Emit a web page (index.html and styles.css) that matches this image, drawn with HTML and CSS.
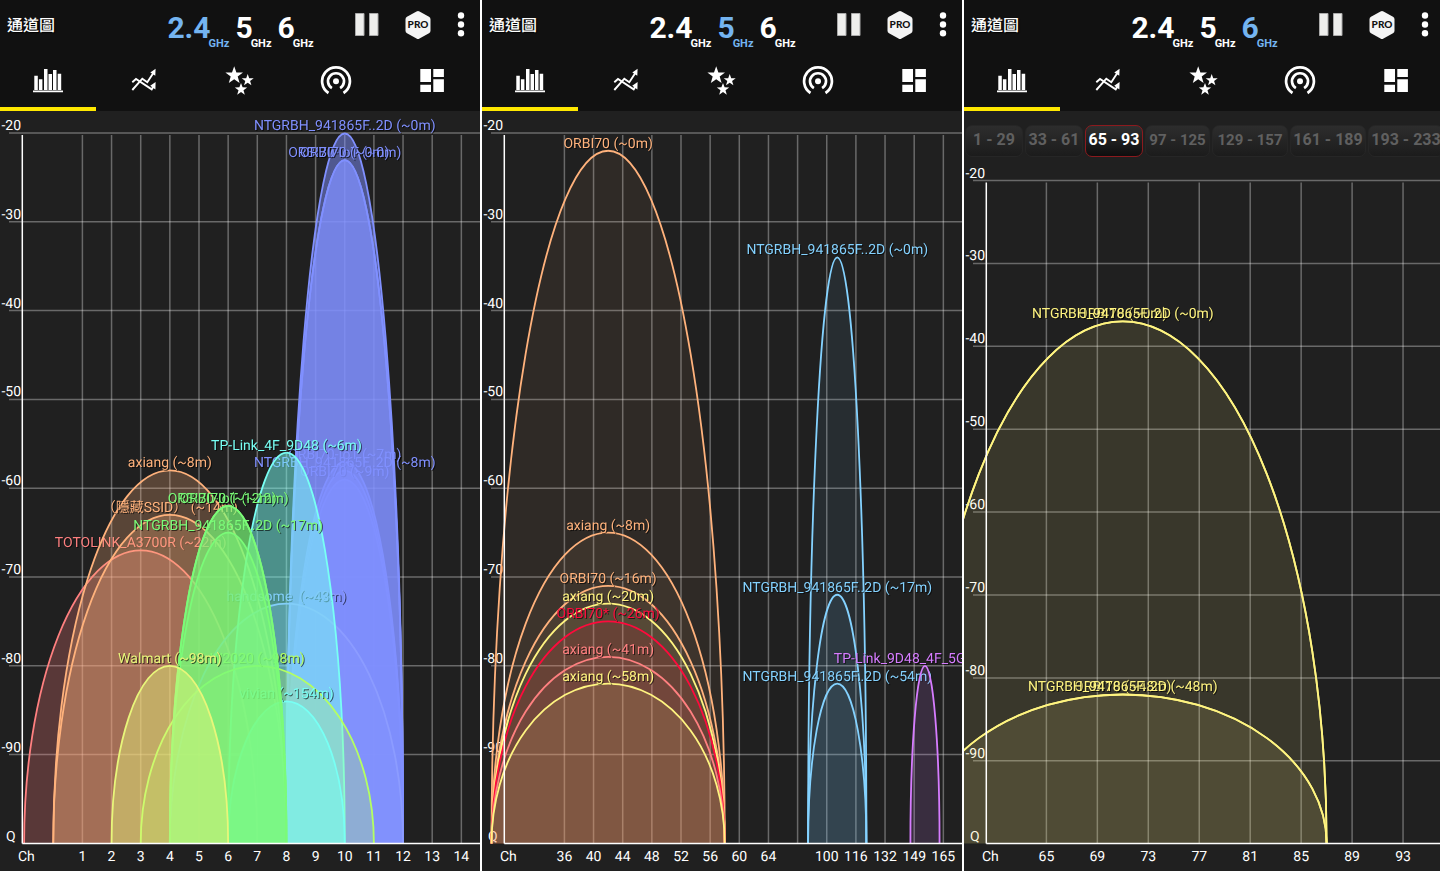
FILE: index.html
```html
<!DOCTYPE html>
<html lang="zh-Hant">
<head>
<meta charset="utf-8">
<title>通道圖</title>
<meta name="viewport" content="width=device-width, initial-scale=1">
<link rel="stylesheet" href="styles.css">
</head>
<body>
<svg class="sprite" aria-hidden="true">
  <symbol id="i-pause" viewBox="0 0 26 26"><path class="pause-bar" d="M1.500 1.500h8.500v22H1.500zM15.500 1.500h8.500v22h-8.500z"/></symbol>
  <symbol id="i-pro" viewBox="0 0 26 30"><path fill="#f4f4f4" d="M11.500 1.500q1.500-1 3 0l9.500 5.200q1.500.8 1.500 2.500v11.600q0 1.700-1.500 2.500l-9.500 5.200q-1.500 1-3 0L2 23.300Q.5 22.500.5 20.800V9.200Q.5 7.500 2 6.700z"/><text class="pro-text" x="13" y="17.500" text-anchor="middle">PRO</text></symbol>
  <symbol id="i-more" viewBox="0 0 8 26"><circle cx="4" cy="3.500" r="3.200"/><circle cx="4" cy="12.500" r="3.200"/><circle cx="4" cy="21.300" r="3.200"/></symbol>
  <symbol id="i-bars" viewBox="0 0 32 32"><path d="M2.300 10.700h3.500V25H2.300zM6.900 14.300h3.500V25H6.900zM12 4h3.500v21H12zM16.500 9H20v16h-3.500zM21 5h3.500v20H21zM25.700 8.700h3.500V25h-3.500zM1 25.600h30V27.200H1z"/></symbol>
  <symbol id="i-trend" viewBox="0 0 32 32"><g fill="none" stroke="#fff" stroke-width="1.900"><path d="M4.300 17.200L8 14l15.700 10.300L26 20.500"/><path d="M4.300 25l10-11.300 5 3.500L26 7"/></g><path d="M27.600 3.800l-.3 7-5-3.200zM27.600 17l-.2 7.500-5.200-3.800z"/></symbol>
  <symbol id="i-stars" viewBox="0 0 32 32"><path d="M10.200 1.200l2.200 6.300 6.600.1-5.300 4 1.900 6.400-5.400-3.800L4.800 18l1.900-6.400-5.300-4 6.600-.1zM23.700 9l1.500 4.200 4.500.1-3.600 2.700 1.300 4.300-3.700-2.600-3.700 2.600 1.300-4.300-3.600-2.700 4.500-.1zM17 18l1.600 4.300 4.600.1-3.700 2.800 1.300 4.500L17 27l-3.800 2.700 1.300-4.500-3.700-2.800 4.600-.1z"/></symbol>
  <symbol id="i-hotspot" viewBox="0 0 32 32"><circle cx="16" cy="16.200" r="3"/><g fill="none" stroke="#fff" stroke-width="2.700"><path d="M11.900 23.100a8 8 0 1 1 8.200 0"/><path d="M8.500 28a13.900 13.900 0 1 1 15 0"/></g></symbol>
  <symbol id="i-board" viewBox="0 0 32 32"><path d="M4.300 4h10.700v13H4.300zM17.300 4h10.600v8H17.300zM4.300 19.700h10.700V27H4.300zM17.300 14.300h10.600V27H17.300z"/></symbol>
</svg>
<main class="panels">
  <section class="panel" data-band="0"></section>
  <section class="panel" data-band="1"></section>
  <section class="panel" data-band="2"></section>
</main>
<template id="header">
  <header class="appbar">
    <h1 class="title">通道圖</h1>
    <nav class="bands">
      <button class="band" type="button"><span class="num">2.4</span><span class="unit">GHz</span></button>
      <button class="band" type="button"><span class="num">5</span><span class="unit">GHz</span></button>
      <button class="band" type="button"><span class="num">6</span><span class="unit">GHz</span></button>
    </nav>
    <div class="actions">
      <button type="button" aria-label="Pause"><svg width="26" height="26"><use href="#i-pause"/></svg></button>
      <button type="button" aria-label="Pro"><svg width="26" height="30"><use href="#i-pro"/></svg></button>
      <button type="button" aria-label="More"><svg width="8" height="26"><use href="#i-more"/></svg></button>
    </div>
  </header>
  <nav class="tabs">
    <button class="tab active" type="button" aria-label="Channel graph"><svg><use href="#i-bars"/></svg></button>
    <button class="tab" type="button" aria-label="Time graph"><svg><use href="#i-trend"/></svg></button>
    <button class="tab" type="button" aria-label="Rating"><svg><use href="#i-stars"/></svg></button>
    <button class="tab" type="button" aria-label="Access points"><svg><use href="#i-hotspot"/></svg></button>
    <button class="tab" type="button" aria-label="Dashboard"><svg><use href="#i-board"/></svg></button>
  </nav>
</template>
<script src="chart.js"></script>
</body>
</html>
```
FILE: styles.css
```css
* { box-sizing: border-box; }
body { margin: 0; background: #fff; overflow-x: hidden; font-family: Roboto, "Noto Sans CJK TC", sans-serif; color: #fff; text-rendering: geometricPrecision; }
button { margin: 0; padding: 0; border: 0; background: none; color: inherit; font: inherit; cursor: pointer; }
svg { display: block; fill: #fff; }
.sprite { position: absolute; width: 0; height: 0; }
.panels { display: grid; grid-template-columns: repeat(3, 1fr); gap: 2px; width: calc(100% + 4px); }
.panel { background: #202020; overflow: hidden; }

.appbar { display: flex; justify-content: space-between; height: 56px; padding: 10px 15px 0 7px; background: #111; }
.title { margin: 0; padding-top: 4px; font-size: 16px; line-height: 24px; font-weight: 500; text-shadow: 1px 1px 1px #000; }
.bands { display: flex; gap: 6px; margin-left: 72px; }
.band { display: flex; align-items: flex-start; }
.band.active { color: #74b4f0; }
.num { font-size: 30px; line-height: 36px; font-weight: 700; }
.unit { margin-left: -2px; padding-top: 27px; font-size: 11px; line-height: 14px; font-weight: 700; }
.actions { display: flex; align-items: flex-start; gap: 25px; }
.actions button:first-child { margin-top: 2px; }
.actions button:last-child { margin-top: 2px; margin-left: 1px; }
.pause-bar { fill: #eeeeec; stroke: #aaa; stroke-width: 1px; }
.pro-text { font: 900 10px Lato, sans-serif; fill: #111; }

.tabs { display: grid; grid-template-columns: repeat(5, 1fr); height: 55px; background: #111; }
.tab { display: flex; align-items: center; justify-content: center; padding-bottom: 1px; border-bottom: 4px solid transparent; }
.tab.active { border-bottom-color: #ffe800; }
.tab svg { width: 32px; height: 32px; }

.chips { display: flex; gap: 2px; padding: 14px 1px 0; }
.chip { flex: 0 0 58px; height: 32px; padding-bottom: 3px; border: 1px solid #262626; border-radius: 7px; background: linear-gradient(#2d2d2d, #1c1c1c); color: #606060; font-size: 16px; font-weight: 700; white-space: nowrap; }
.chip.mid { flex-basis: 65px; font-size: 15px; }
.chip.wide { flex-basis: 76px; }
.chip.wide.small { font-size: 15px; }
.chip.active { border-color: #8c1a1e; background: linear-gradient(#303030, #0e0e0e); color: #fff; }

.chart { width: 100%; height: auto; overflow: hidden; }
.grid { stroke: #fff; stroke-opacity: .33; stroke-width: 1.500px; }
.axis { stroke: #fff; stroke-width: 1.500px; }
.tick { font-size: 14px; fill: #fff; }
.curve { stroke-width: 1.800px; }
.label { font-size: 14px; filter: drop-shadow(1px 1px 0 rgba(0, 0, 0, .6)); }
```
FILE: chart.js
```js
const RED = '#ff8080', ORANGE = '#ffb27c', YELLOW = '#fff480', LIME = '#b4ff62', GREEN = '#7bfb78';
const CYAN = '#78fff4', SKY = '#84d2ff', BLUE = '#8090ff', PURPLE = '#d67cff', CRIMSON = '#ff0a3c';

const dbm = [-20, -30, -40, -50, -60, -70, -80, -90];

// Each network: label, centre position in grid steps, level, half width in steps, colour, fill opacity
const bands = [
  { top: 111, y0: 133, dy: 88.8, step: 29.15,
    ticks: [1, 2, 3, 4, 5, 6, 7, 8, 9, 10, 11, 12, 13, 14],
    nets: [
      ['TOTOLINK_A3700R (~22m)', 2, -67, 4, RED, .26],
      ['axiang (~8m)', 3, -58, 4, ORANGE, .26],
      ['（隱藏SSID） (~14m)', 3, -63, 4, ORANGE, .26],
      ['ORBI70-IoT (~7m)', 9, -57, 2, BLUE, .5],
      ['NTGRBH_941865F..2D (~8m)', 9, -58, 2, BLUE, .5],
      ['ORBI70 (~9m)', 9, -59, 2, BLUE, .5],
      ['NTGRBH_941865F..2D (~0m)', 9, -20, 2, BLUE, .5],
      ['ORBI70-IoT (~0m)', 9, -23, 2, BLUE, .5],
      ['ORBI70 (~0m)', 9, -23, 2, BLUE, .5],
      ['handsome\u00a0 (~43m)', 7, -73, 4, '#8c9cff', .26],
      ['TP-Link_4F_9D48 (~6m)', 7, -56, 2, CYAN, .5],
      ['W2020 (~98m)', 6, -80, 4, LIME, .26],
      ['vivian (~154m)', 7, -84, 2, CYAN, .5],
      ['NTGRBH_941865F..2D (~17m)', 5, -65, 2, GREEN, .45],
      ['ORBI70-IoT (~12m)', 5, -62, 2, GREEN, .45],
      ['ORBI70 (~12m)', 5, -62, 2, GREEN, .45],
      ['Walmart (~98m)', 3, -80, 2, '#e8f67a', .45]
    ] },
  { top: 111, y0: 133, dy: 88.8, step: 29.15,
    ticks: [36, 40, 44, 48, 52, 56, 60, 64, '', 100, 116, 132, 149, 165],
    nets: [
      ['ORBI70 (~0m)', 1.5, -22, 4, ORANGE, .07],
      ['axiang (~8m)', 1.5, -65, 4, ORANGE, .07],
      ['ORBI70 (~16m)', 1.5, -71, 4, ORANGE, .07],
      ['axiang (~20m)', 1.5, -73, 4, YELLOW, .07],
      ['ORBI70* (~26m)', 1.5, -75, 4, CRIMSON, .1],
      ['axiang (~41m)', 1.5, -79, 4, RED, .08],
      ['axiang (~58m)', 1.5, -82, 4, YELLOW, .1],
      ['NTGRBH_941865F..2D (~0m)', 9.36, -34, 1, SKY, .08],
      ['NTGRBH_941865F..2D (~17m)', 9.36, -72, 1, SKY, .08],
      ['NTGRBH_941865F..2D (~54m)', 9.36, -82, 1, SKY, .08],
      ['TP-Link_9D48_4F_5G (~98m)', 12.37, -80, .5, PURPLE, .14]
    ] },
  { top: 157, y0: 180.5, dy: 82.9, step: 50.95, chips: true,
    ticks: [65, 69, 73, 77, 81, 85, 89, 93],
    nets: [
      ['ORBI70 (~0m)', 1.5, -37, 4, YELLOW, .06],
      ['NTGRBH_941865F..2D (~0m)', 1.5, -37, 4, YELLOW, .06],
      ['ORBI70 (~48m)', 1.5, -82, 4, YELLOW, .06],
      ['NTGRBH_941865F..2D (~48m)', 1.5, -82, 4, YELLOW, .06]
    ] }
];

const chips = [
  ['1 - 29', ''], ['33 - 61', ''], ['65 - 93', 'active'], ['97 - 125', 'mid'],
  ['129 - 157', 'wide small'], ['161 - 189', 'wide'], ['193 - 233', 'wide']
];

function chart(band) {
  const { top, y0, dy, step, ticks, nets } = band;
  const X0 = 82.4, AXIS = 22.3, BASE = 843.5, BOTTOM = 871;
  const yOf = level => y0 + (-20 - level) * dy / 10;
  let s = `<svg class="chart" role="img" aria-label="Channel graph" viewBox="0 ${top} 480 ${BOTTOM - top}">`;
  dbm.forEach(l => { s += `<path class="grid" d="M9 ${yOf(l)}H480"/>`; });
  ticks.forEach((t, i) => {
    const x = X0 + i * step;
    s += `<path class="grid" d="M${x} ${y0 + 2}V${BASE}"/><text class="tick" x="${x}" y="861" text-anchor="middle">${t}</text>`;
  });
  dbm.forEach(l => { s += `<text class="tick" x="21" y="${yOf(l) - 3}" text-anchor="end">${l}</text>`; });
  s += '<text class="tick" x="6" y="841">Q</text><text class="tick" x="18" y="861">Ch</text>';
  nets.forEach(([name, pos, level, half, color, alpha]) => {
    const cx = X0 + pos * step, rx = half * step, y = yOf(level);
    s += `<path class="curve" fill="${color}" fill-opacity="${alpha}" stroke="${color}" d="M${cx - rx} ${BASE}A${rx} ${BASE - y} 0 0 1 ${cx + rx} ${BASE}"/>`;
    s += `<text class="label" fill="${color}" x="${cx}" y="${y - 3}" text-anchor="middle">${name}</text>`;
  });
  s += `<path class="axis" d="M${AXIS} ${y0 + 2}V${BASE}M${AXIS} ${BASE}H480"/></svg>`;
  return s;
}

document.querySelectorAll('.panel').forEach((panel, i) => {
  panel.append(document.getElementById('header').content.cloneNode(true));
  panel.querySelectorAll('.band')[i].classList.add('active');
  let html = '';
  if (bands[i].chips) {
    html = '<div class="chips">' + chips.map(([t, c]) => `<button type="button" class="chip ${c}">${t}</button>`).join('') + '</div>';
  }
  panel.insertAdjacentHTML('beforeend', html + chart(bands[i]));
});
```
